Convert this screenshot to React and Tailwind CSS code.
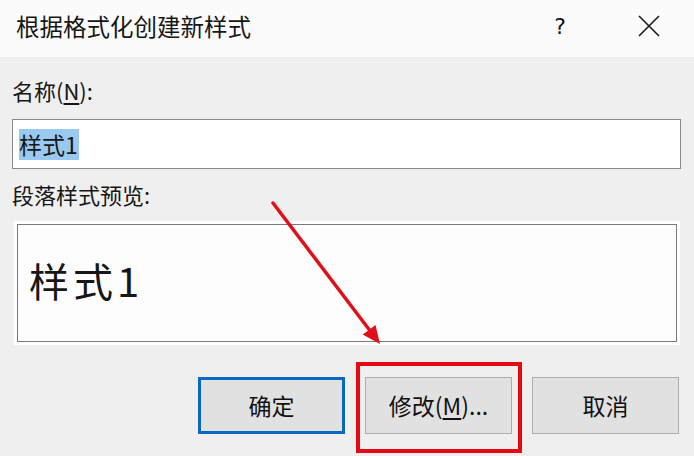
import React from "react";

function Button({ children, primary }) {
  return (
    <div
      className={
        "w-[147px] h-[57px] flex items-center justify-center bg-[#e1e1e1] text-[23px] text-[#111] " +
        (primary ? "border-[3px] border-[#0b67c4]" : "border border-[#adadad]")
      }
    >
      {children}
    </div>
  );
}

export default function App() {
  return (
    <div className="relative w-[694px] h-[456px] overflow-hidden bg-[#f0eff0] font-['Noto_Sans_CJK_SC',sans-serif] text-[#161616]">
      {/* title bar */}
      <div className="h-[57px] bg-[#fbfbfb] flex items-center pl-[16px] pr-[34px]">
        <span className="text-[23.5px] leading-none mt-[-3px]">根据格式化创建新样式</span>
        <span className="ml-auto text-[22px] leading-none mt-[-4px] mr-[72px] font-['DejaVu_Sans',sans-serif]">?</span>
        <svg width="22" height="22" viewBox="0 0 22 22" className="mt-[-6px]">
          <path d="M1 1 L21 21 M21 1 L1 21" stroke="#1a1a1a" strokeWidth="1.6" />
        </svg>
      </div>

      {/* body */}
      <div className="flex flex-col pl-[12px] pr-[13px]">
        <div className="mt-[19px] h-[28px] leading-[28px] text-[22px]">
          名称(<u className="underline-offset-[3px]">N</u>):
        </div>
        <div className="mt-[15px] h-[50px] bg-white border border-[#8a8a8a] flex items-center pl-[6px]">
          <span className="bg-[#99c9ef] text-[23px] leading-[31px] h-[31px] pr-[1px]">样式1</span>
        </div>
        <div className="mt-[11px] h-[28px] leading-[28px] text-[22px]">段落样式预览:</div>
        <div className="mt-[13px] ml-[2px] mr-[1px] bg-white p-[3px]">
          <div className="h-[118px] border border-[#7a7a7a] bg-[#fdfdfd] flex items-center pl-[11px]">
            <span className="text-[40px] leading-none tracking-[4px] mt-[-6px]">样式1</span>
          </div>
        </div>
        <div className="mt-[32px] flex justify-end gap-[20px] pr-[2px]">
          <Button primary>确定</Button>
          <Button>
            <span>
              修改(<u className="underline-offset-[3px]">M</u>)...
            </span>
          </Button>
          <Button>取消</Button>
        </div>
      </div>

      {/* annotation: red box */}
      <div className="absolute left-[356px] top-[362px] w-[166px] h-[91px] border-4 border-[#e50914]" />

      {/* annotation: red arrow */}
      <svg className="absolute left-0 top-0" width="694" height="456" viewBox="0 0 694 456">
        <line x1="273" y1="203" x2="371" y2="332" stroke="#e0101a" strokeWidth="3.5" strokeLinecap="round" />
        <polygon points="380,344 362.7,334.5 375.5,324.9" fill="#e0101a" />
      </svg>
    </div>
  );
}
